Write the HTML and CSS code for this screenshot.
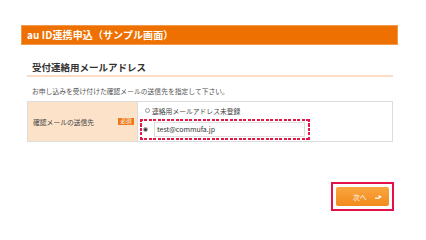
FILE: index.html
```html
<!DOCTYPE html>
<html lang="ja">
<head>
<meta charset="utf-8">
<title>au ID連携申込（サンプル画面）</title>
<link rel="stylesheet" href="styles.css">
</head>
<body>
<div class="page">
  <div class="header">au ID連携申込（サンプル画面）</div>
  <div class="section">
    <h2 class="title">受付連絡用メールアドレス</h2>
    <p class="desc">お申し込みを受け付けた確認メールの送信先を指定して下さい。</p>
    <div class="table">
      <div class="label-cell">
        <span class="label">確認メールの送信先</span>
        <span class="badge">必須</span>
      </div>
      <div class="value-cell">
        <div class="option first">
          <span class="radio"></span>
          <span class="opt-text">連絡用メールアドレス未登録</span>
        </div>
        <div class="option highlight">
          <span class="radio checked"></span>
          <span class="input">test@commufa.jp</span>
        </div>
      </div>
    </div>
    <div class="actions">
      <div class="btn-frame">
        <div class="btn">
          <span class="btn-text">次へ</span>
          <svg class="btn-arrow" width="7" height="5" viewBox="0 0 7 5">
            <path d="M0 4.2 H4" stroke="#fff" stroke-width="1.2" fill="none"/>
            <path d="M3.6 1 L7 2.8 L3.6 4.8 Z" fill="#fff"/>
          </svg>
        </div>
      </div>
    </div>
  </div>
</div>
</body>
</html>
```
FILE: styles.css
```css
* { box-sizing: border-box; }
html, body { margin: 0; padding: 0; background: #fff; }
body {
  padding-top: 25px;
  font-family: "Noto Sans CJK JP", "Noto Sans", sans-serif;
  color: #333;
}
.page {
  width: 377px;
  margin-left: 21px;
}
.header {
  height: 20px;
  line-height: 18px;
  background: #ee7000;
  border: 1px solid #f39a4a;
  color: #fff;
  font-weight: bold;
  font-size: 10px;
  padding-left: 5px;
  letter-spacing: 0.1px;
}
.section {
  padding: 0 5px 0 6px;
}
.title {
  margin: 14px 0 0;
  padding: 0 5px;
  font-size: 9.5px;
  font-weight: bold;
  line-height: 16px;
  border-bottom: 2px solid #fcdcc4;
  color: #333;
}
.desc {
  margin: 9px 0 0;
  padding-left: 5px;
  font-size: 6.8px;
  line-height: 10px;
  color: #555;
}
.table {
  margin-top: 5px;
  display: flex;
  height: 41px;
  border: 1px solid #dcdcdc;
}
.label-cell {
  width: 110px;
  background: #fde2ca;
  border-right: 1px solid #dcdcdc;
  display: flex;
  align-items: center;
  justify-content: space-between;
  padding: 0 3px 0 5px;
}
.label {
  font-size: 6.8px;
  color: #444;
}
.badge {
  background: #f07818;
  color: #fff;
  font-size: 5.5px;
  line-height: 7px;
  padding: 0 2px;
  width: 16px;
  text-align: center;
}
.value-cell {
  flex: 1;
  display: flex;
  flex-direction: column;
  padding: 0 0 0 2px;
}
.option {
  display: flex;
  align-items: center;
}
.option.first {
  height: 17px;
  padding-left: 5px;
}
.option.highlight {
  width: 170px;
  height: 21px;
  padding: 2px 2px 2px 3px;
  background:
    repeating-linear-gradient(90deg, #e4174b 0 3px, transparent 3px 4.5px) top / 100% 2px no-repeat,
    repeating-linear-gradient(90deg, #e4174b 0 3px, transparent 3px 4.5px) bottom / 100% 2px no-repeat,
    repeating-linear-gradient(180deg, #e4174b 0 3px, transparent 3px 4.5px) left / 2px 100% no-repeat,
    repeating-linear-gradient(180deg, #e4174b 0 3px, transparent 3px 4.5px) right / 2px 100% no-repeat;
}
.radio {
  width: 5px;
  height: 5px;
  border: 1px solid #999;
  border-radius: 50%;
  margin-right: 2px;
  flex: none;
  display: flex;
  align-items: center;
  justify-content: center;
  background: #fff;
}
.radio.checked::after {
  content: "";
  width: 3px;
  height: 3px;
  border-radius: 50%;
  background: #333;
}
.opt-text {
  font-size: 6.8px;
  color: #444;
}
.input {
  margin-left: 4px;
  width: 151px;
  height: 15px;
  border: 1px solid #dedede;
  font-size: 7px;
  line-height: 13px;
  padding-left: 2px;
  color: #333;
}
.actions {
  margin-top: 40px;
  display: flex;
  justify-content: flex-end;
}
.btn-frame {
  border: 2px solid #e3104a;
  padding: 3px;
  margin-right: -1px;
}
.btn {
  width: 53px;
  height: 19px;
  border-radius: 2px;
  background: linear-gradient(#f9a640, #f28a1c);
  display: flex;
  align-items: center;
  padding: 0 7px 0 17px;
}
.btn-text {
  color: #fff;
  font-size: 6.8px;
}
.btn-arrow {
  margin-left: auto;
}
```
